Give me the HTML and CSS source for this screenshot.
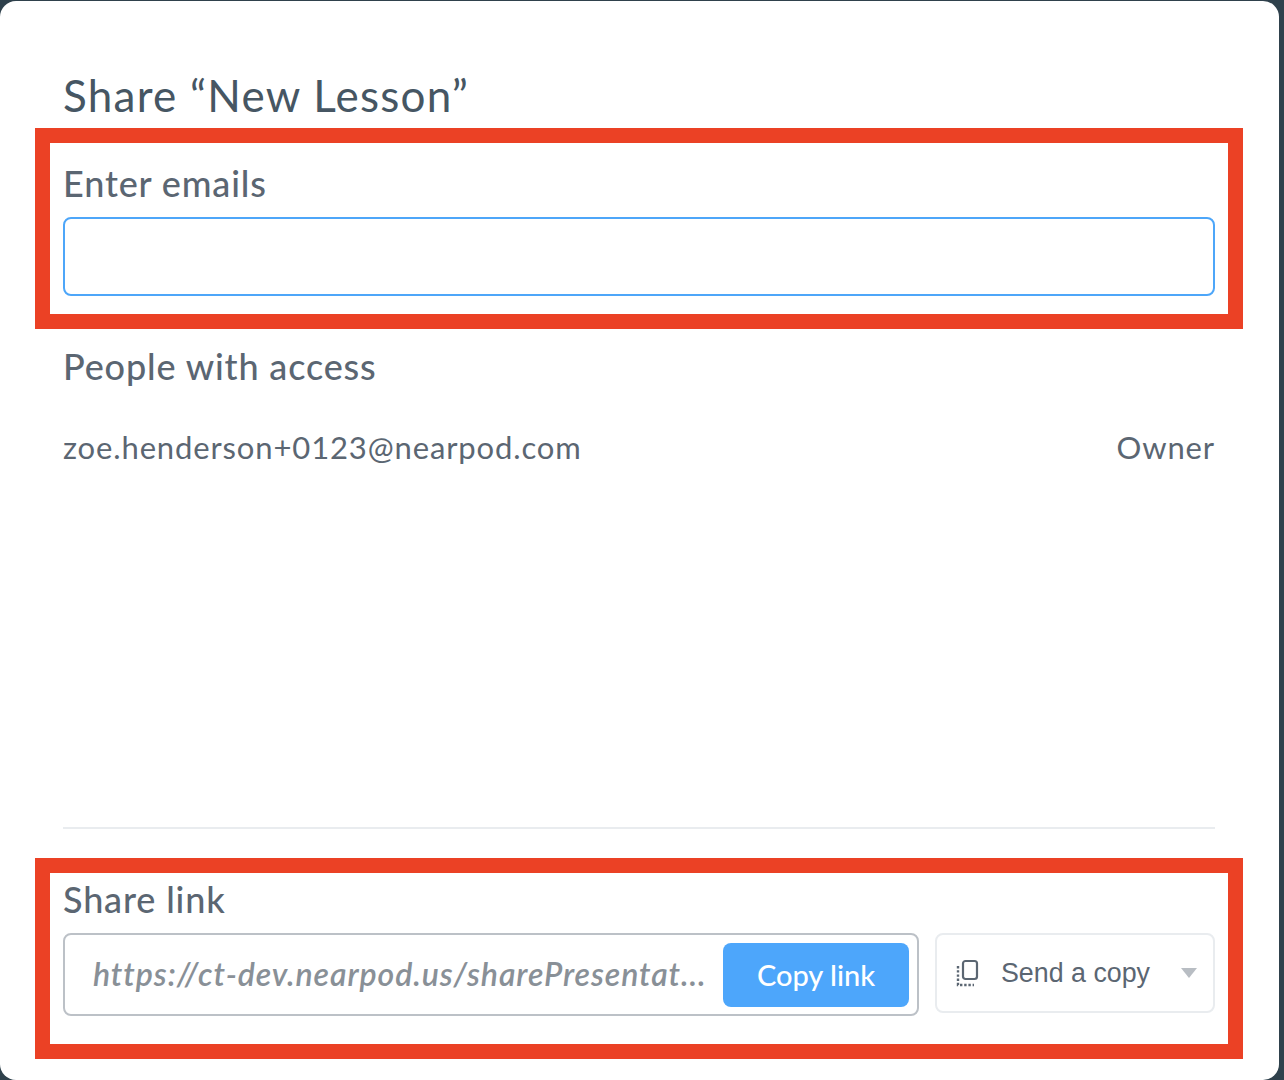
FILE: index.html
```html
<!DOCTYPE html>
<html lang="en">
  <head>
    <meta charset="UTF-8" />
    <meta name="viewport" content="width=device-width, initial-scale=1.0" />
    <title>Share New Lesson</title>
    <link rel="stylesheet" href="styles.css">
  </head>
  <body>
    <div class="modal">
      <h1 class="modal-title">Share “New Lesson”</h1>

      <label class="section-label emails-label" for="emails">Enter emails</label>
      <input class="emails-input" type="text" id="emails" name="emails" />

      <h2 class="section-label people-label">People with access</h2>
      <div class="person-row">
        <span>zoe.henderson+0123@nearpod.com</span>
        <span>Owner</span>
      </div>

      <hr class="divider" />

      <h2 class="section-label link-label">Share link</h2>
      <div class="link-row">
        <div class="link-box">
          <span class="link-text">https://ct-dev.nearpod.us/sharePresentat...</span>
          <button type="button" class="copy-btn">Copy link</button>
        </div>
        <button type="button" class="send-btn">
          <svg class="send-icon" width="24" height="28" viewBox="0 0 24 28" fill="none">
            <rect x="7" y="2" width="14" height="18" rx="2.5" stroke="#5b6672" stroke-width="2.2" />
            <path d="M2 7v19h16" stroke="#5b6672" stroke-width="2.4" stroke-dasharray="2.4 1.8" />
          </svg>
          <span class="send-text">Send a copy</span>
          <span class="send-caret"></span>
        </button>
      </div>
    </div>

    <div class="callout callout-emails"></div>
    <div class="callout callout-link"></div>
  </body>
</html>
```

FILE: styles.css
```css
body {
  margin: 0;
  height: 1080px;
  overflow: hidden;
  background-color: #2f414c;
  font-family: "Lato", "Noto Sans", sans-serif;
  position: relative;
}

.modal {
  box-sizing: border-box;
  width: 1279px;
  height: 1079px;
  margin-top: 1px;
  padding: 0 64px 0 63px;
  background-color: #fff;
  border-radius: 16px;
  color: #5b6672;
}

.modal-title {
  margin: 0;
  padding-top: 67px;
  font-size: 44px;
  line-height: 54px;
  font-weight: 400;
  letter-spacing: 1.25px;
  color: #465663;
}

.section-label {
  display: block;
  margin: 0;
  font-size: 36px;
  line-height: 44px;
  font-weight: 500;
  letter-spacing: 0.85px;
  color: #5b6672;
}

.emails-label {
  margin-top: 39px;
}

.emails-input {
  display: block;
  box-sizing: border-box;
  width: 100%;
  height: 79px;
  margin-top: 12px;
  border: 2px solid #4da6f9;
  border-radius: 8px;
  outline: none;
}

.people-label {
  margin-top: 48px;
}

.person-row {
  display: flex;
  justify-content: space-between;
  margin-top: 39px;
  font-size: 31px;
  line-height: 40px;
  letter-spacing: 0.87px;
  color: #5b6672;
}

.divider {
  height: 2px;
  margin: 360px 0 0;
  border: none;
  background-color: #e9ecef;
}

.link-label {
  margin-top: 48px;
}

.link-row {
  display: flex;
  align-items: flex-start;
  gap: 16px;
  margin-top: 12px;
}

.link-box {
  box-sizing: border-box;
  display: flex;
  align-items: center;
  justify-content: space-between;
  flex: 1;
  min-width: 0;
  height: 83px;
  padding: 0 8px 0 28px;
  border: 2px solid #bcc1c7;
  border-radius: 8px;
}

.link-text {
  margin-bottom: 2px;
  white-space: nowrap;
  font-size: 32px;
  font-style: italic;
  font-weight: 600;
  letter-spacing: 0.93px;
  color: #899097;
}

.copy-btn {
  width: 186px;
  height: 64px;
  border: none;
  border-radius: 8px;
  background-color: #4da6fb;
  color: #fff;
  font-family: inherit;
  font-size: 29px;
  font-weight: 500;
}

.send-btn {
  box-sizing: border-box;
  display: flex;
  align-items: center;
  width: 280px;
  height: 80px;
  padding: 0 16px 0 19px;
  border: 2px solid #e9ecef;
  border-radius: 8px;
  background-color: #fff;
  font-family: "Liberation Sans", Arial, sans-serif;
  font-size: 26.8px;
  color: #5b6672;
}

.send-icon {
  flex: none;
}

.send-text {
  margin-left: 21px;
}

.send-caret {
  margin-left: auto;
  width: 0;
  height: 0;
  border-left: 8px solid transparent;
  border-right: 8px solid transparent;
  border-top: 10px solid #b8bdc3;
}

/* red annotation frames drawn over the screenshot */
.callout {
  position: absolute;
  left: 35px;
  box-sizing: border-box;
  width: 1208px;
  height: 201px;
  border: 15px solid #eb4125;
}

.callout-emails {
  top: 128px;
}

.callout-link {
  top: 858px;
}
```
